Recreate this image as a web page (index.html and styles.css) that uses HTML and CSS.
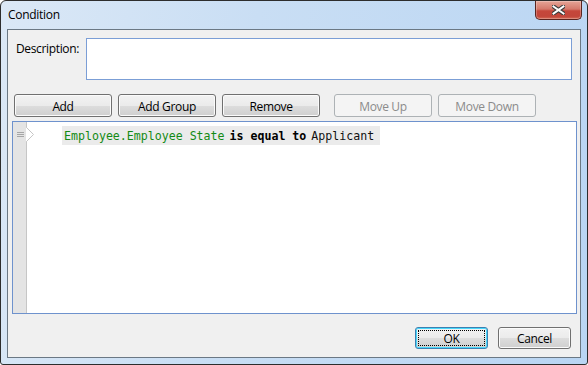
FILE: index.html
```html
<!DOCTYPE html>
<html>
<head>
<meta charset="utf-8">
<link rel="stylesheet" href="styles.css">
</head>
<body>
<div class="window">
  <div class="titlebar">
    <span class="title">Condition</span>
    <div class="close">
      <svg width="13" height="10" viewBox="0 0 13 10">
        <path d="M1.5 1.5 L11.5 8.5 M11.5 1.5 L1.5 8.5" stroke="#3b3b3b" stroke-width="4.2" stroke-linecap="square"/>
        <path d="M1.5 1.5 L11.5 8.5 M11.5 1.5 L1.5 8.5" stroke="#ffffff" stroke-width="2" stroke-linecap="square"/>
      </svg>
    </div>
  </div>
  <div class="client">
    <div class="desc-row">
      <label class="desc-label">Description:</label>
      <div class="textbox"></div>
    </div>
    <div class="toolbar">
      <div class="group">
        <button class="btn">Add</button>
        <button class="btn">Add Group</button>
        <button class="btn">Remove</button>
      </div>
      <div class="group">
        <button class="btn" disabled>Move Up</button>
        <button class="btn" disabled>Move Down</button>
      </div>
    </div>
    <div class="editor">
      <div class="gutter">
        <svg class="marker" width="12" height="16" viewBox="0 0 12 16">
          <path d="M0 0.5 L0.5 0.5 L7.5 7.5 L0.5 14.5 L0 14.5" fill="#ffffff" stroke="#c6c6c6" stroke-width="1"/>
        </svg>
        <svg class="grip" width="7" height="6" viewBox="0 0 7 6">
          <path d="M0 0.5 H7 M0 2.5 H7 M0 4.5 H7" stroke="#a6a6a6" stroke-width="1"/>
        </svg>
      </div>
      <div class="code">
        <div class="line">
          <span class="field">Employee.Employee State</span>
          <span class="op">is equal to</span>
          <span class="value">Applicant</span>
        </div>
      </div>
    </div>
    <div class="footer">
      <button class="btn dlg default"><span class="focus">OK</span></button>
      <button class="btn dlg">Cancel</button>
    </div>
  </div>
</div>
</body>
</html>
```
FILE: styles.css
```css
* { box-sizing: border-box; }
html, body { margin: 0; padding: 0; background: #ffffff; }
body { font-family: "Open Sans", "Noto Sans", sans-serif; font-size: 12px; color: #000; }

.window {
  width: 588px;
  height: 365px;
  border: 1px solid #2d2d2d;
  border-radius: 6px 6px 3px 3px;
  background: linear-gradient(100deg, #dbe8f6 0%, #c9def4 40%, #b9d5f3 100%);
  display: flex;
  flex-direction: column;
  padding: 0 6px 6px 6px;
}

.titlebar {
  height: 28px;
  display: flex;
  justify-content: space-between;
  align-items: flex-start;
  flex: none;
}
.title {
  margin-top: 6px;
  margin-left: 1px;
  font-size: 12px;
  line-height: 16px;
  letter-spacing: -0.3px;
}
.close {
  width: 47px;
  height: 19px;
  margin-right: -1px;
  border: 1px solid #5a2520;
  border-top: none;
  border-radius: 0 0 5px 5px;
  background: linear-gradient(#e6a597 0%, #d5796b 45%, #c5473b 55%, #c2463a 85%, #d46a55 100%);
  display: flex;
  align-items: center;
  justify-content: center;
  box-shadow: inset 0 0 0 1px rgba(255,255,255,0.25);
}

.client {
  flex: 1;
  background: #f0f0f0;
  border: 1px solid #6b7884;
  display: flex;
  flex-direction: column;
}

.desc-row {
  display: flex;
  padding: 8px 8px 0 8px;
}
.desc-label {
  width: 70px;
  padding-top: 3px;
  line-height: 16px;
  letter-spacing: -0.35px;
}
.textbox {
  flex: 1;
  height: 42px;
  background: #fff;
  border: 1px solid #7b9ed6;
}

.toolbar {
  display: flex;
  gap: 14px;
  padding: 14px 6px 0 6px;
}
.group { display: flex; gap: 6px; }

.btn {
  width: 98px;
  height: 23px;
  padding: 1px 0 0 0;
  font-family: inherit;
  font-size: 12px;
  letter-spacing: -0.35px;
  color: #000;
  border: 1px solid #707070;
  border-radius: 3px;
  background: linear-gradient(#f2f2f2 0%, #ebebeb 50%, #dddddd 51%, #cfcfcf 100%);
  box-shadow: inset 0 0 0 1px #fbfbfb;
}
.btn[disabled] {
  color: #8b8b8b;
  border-color: #adb2b5;
  background: #f4f4f4;
  box-shadow: none;
}

.editor {
  margin: 4px 3px 0 4px;
  height: 193px;
  border: 1px solid #6e92cd;
  background: #fff;
  display: flex;
  flex: none;
}
.gutter {
  width: 14px;
  background: #e4e4e4;
  border-right: 1px solid #c6c6c6;
  position: relative;
  flex: none;
}
.marker {
  position: absolute;
  left: 13px;
  top: 5px;
}
.grip {
  position: absolute;
  left: 4px;
  top: 10px;
}
.code {
  flex: 1;
  padding: 4px 0 0 35px;
}
.line {
  display: inline-flex;
  gap: 5px;
  height: 19px;
  align-items: center;
  padding: 0 6px 0 2px;
  background: #ebebeb;
  font-family: "DejaVu Sans Mono", "Liberation Mono", monospace;
  font-size: 11.6px;
}
.field { color: #138a14; }
.op { font-weight: bold; color: #000; }
.value { color: #111; }

.footer {
  flex: 1;
  display: flex;
  justify-content: flex-end;
  align-items: flex-end;
  gap: 10px;
  padding: 0 9px 8px 0;
}
.btn.dlg { width: 73px; height: 22px; }
.btn.default {
  border-color: #3c7fb1;
  box-shadow: inset 0 0 0 1px #48d8fb;
  padding: 2px;
}
.focus {
  display: flex;
  align-items: center;
  justify-content: center;
  width: 100%;
  height: 100%;
  outline: 1px dotted #000;
  outline-offset: -1px;
}
```
